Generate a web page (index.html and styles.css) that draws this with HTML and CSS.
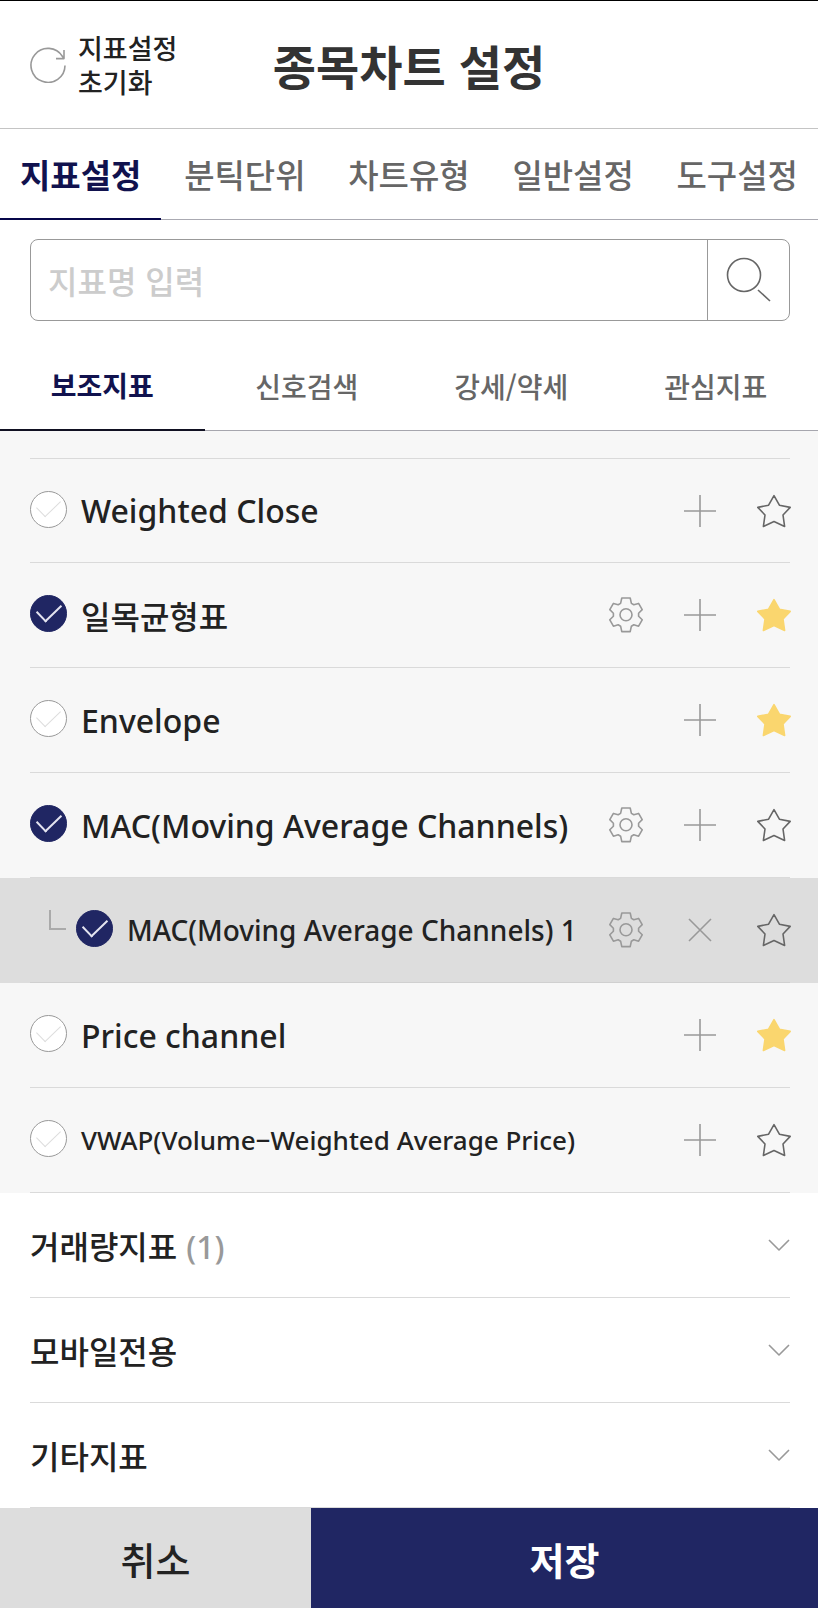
FILE: index.html
```html
<!DOCTYPE html>
<html lang="ko">
<head>
    <meta charset="UTF-8">
    <meta name="viewport" content="width=device-width, initial-scale=1.0">
    <title>종목차트 설정</title>
    <link rel="stylesheet" href="styles.css">
</head>
<body>
    <!-- shared icons -->
    <svg class="sprite" aria-hidden="true">
        <symbol id="gear" viewBox="0 0 34 36">
            <path d="M12.8 1h8.4l1.2 5.4 2.4 1.4 4.8-1.4 3.6 6.2-3.6 3.6v3l3.6 3.6-3.6 6.4-4.8-1.4-2.4 1.4-1.2 5.4h-8.4l-1.2-5.4-2.4-1.4-4.8 1.4-3.6-6.4 3.6-3.6v-3L.8 12.6l3.6-6.2 4.8 1.4 2.4-1.4z"/>
            <circle cx="17" cy="17.8" r="6"/>
        </symbol>
        <symbol id="plus" viewBox="0 0 34 36">
            <path d="M1 18h32M17 2v32"/>
        </symbol>
        <symbol id="close" viewBox="0 0 34 36">
            <path d="M6 7l22 22M28 7L6 29"/>
        </symbol>
        <symbol id="star" viewBox="0 0 34 36">
            <path d="M17 2.6l5.4 9.6 10.8 2.2-7.2 7.6 1.6 11.4-10.6-4.8-10.6 4.8L8 22 .8 14.4l10.8-2.2z"/>
        </symbol>
        <symbol id="chevron" viewBox="0 0 22 12">
            <path d="M1 1l10 10L21 1"/>
        </symbol>
    </svg>

    <header class="header">
        <button class="reset" type="button">
            <svg width="36" height="36" viewBox="0 0 36 36" aria-hidden="true">
                <path d="M35 18.5A17 17 0 1 1 32.5 9.5L34 11.5M34 3v8.6h-8"/>
            </svg>
            <span>지표설정<br>초기화</span>
        </button>
        <h1>종목차트 설정</h1>
    </header>

    <nav class="tabs">
        <button class="active" type="button">지표설정</button>
        <button type="button">분틱단위</button>
        <button type="button">차트유형</button>
        <button type="button">일반설정</button>
        <button type="button">도구설정</button>
    </nav>

    <form class="search-bar">
        <input type="text" placeholder="지표명 입력" aria-label="지표명 입력">
        <button type="button" aria-label="검색">
            <svg width="46" height="46" viewBox="0 0 46 46" aria-hidden="true">
                <circle cx="18" cy="18" r="16.5"/>
                <path d="M32 33l12 11"/>
            </svg>
        </button>
    </form>

    <nav class="sub-tabs">
        <button class="active" type="button">보조지표</button>
        <button type="button">신호검색</button>
        <button type="button">강세/약세</button>
        <button type="button">관심지표</button>
    </nav>

    <ul class="indicators">
        <li>
            <div class="row">
                <input type="checkbox" id="weighted">
                <label for="weighted">Weighted Close</label>
                <button type="button" aria-label="추가"><svg><use href="#plus"/></svg></button>
                <button class="star" type="button" aria-label="관심"><svg><use href="#star"/></svg></button>
            </div>
        </li>
        <li>
            <div class="row">
                <input type="checkbox" id="ichimoku" checked>
                <label for="ichimoku">일목균형표</label>
                <button type="button" aria-label="설정"><svg><use href="#gear"/></svg></button>
                <button type="button" aria-label="추가"><svg><use href="#plus"/></svg></button>
                <button class="star on" type="button" aria-label="관심"><svg><use href="#star"/></svg></button>
            </div>
        </li>
        <li>
            <div class="row">
                <input type="checkbox" id="envelope">
                <label for="envelope">Envelope</label>
                <button type="button" aria-label="추가"><svg><use href="#plus"/></svg></button>
                <button class="star on" type="button" aria-label="관심"><svg><use href="#star"/></svg></button>
            </div>
        </li>
        <li>
            <div class="row">
                <input type="checkbox" id="mac" checked>
                <label for="mac">MAC(Moving Average Channels)</label>
                <button type="button" aria-label="설정"><svg><use href="#gear"/></svg></button>
                <button type="button" aria-label="추가"><svg><use href="#plus"/></svg></button>
                <button class="star" type="button" aria-label="관심"><svg><use href="#star"/></svg></button>
            </div>
        </li>
        <li class="child">
            <div class="row">
                <span class="branch"></span>
                <input type="checkbox" id="mac1" checked>
                <label class="medium" for="mac1">MAC(Moving Average Channels) 1</label>
                <button type="button" aria-label="설정"><svg><use href="#gear"/></svg></button>
                <button type="button" aria-label="삭제"><svg><use href="#close"/></svg></button>
                <button class="star" type="button" aria-label="관심"><svg><use href="#star"/></svg></button>
            </div>
        </li>
        <li>
            <div class="row">
                <input type="checkbox" id="price">
                <label for="price">Price channel</label>
                <button type="button" aria-label="추가"><svg><use href="#plus"/></svg></button>
                <button class="star on" type="button" aria-label="관심"><svg><use href="#star"/></svg></button>
            </div>
        </li>
        <li>
            <div class="row">
                <input type="checkbox" id="vwap">
                <label class="small" for="vwap">VWAP(Volume−Weighted Average Price)</label>
                <button type="button" aria-label="추가"><svg><use href="#plus"/></svg></button>
                <button class="star" type="button" aria-label="관심"><svg><use href="#star"/></svg></button>
            </div>
        </li>
    </ul>

    <div class="groups">
        <button type="button"><span>거래량지표 <span class="count">(1)</span></span><svg><use href="#chevron"/></svg></button>
        <button type="button"><span>모바일전용</span><svg><use href="#chevron"/></svg></button>
        <button type="button"><span>기타지표</span><svg><use href="#chevron"/></svg></button>
    </div>

    <footer class="footer">
        <button class="cancel" type="button">취소</button>
        <button class="save" type="button">저장</button>
    </footer>
</body>
</html>
```

FILE: styles.css
```css
* {
    box-sizing: border-box;
}
body {
    margin: 0;
    min-height: 100vh;
    display: flex;
    flex-direction: column;
    background-color: #fff;
    color: #222;
    font-family: "Noto Sans CJK KR", sans-serif;
    font-weight: 500;
}
button, input {
    margin: 0;
    padding: 0;
    border: none;
    border-radius: 0;
    background: none;
    color: inherit;
    font: inherit;
}
button {
    cursor: pointer;
}
svg {
    display: block;
    fill: none;
    stroke: #999;
    stroke-width: 1.6;
    stroke-linejoin: round;
}
.sprite {
    position: absolute;
    width: 0;
    height: 0;
}

/* header */
.header {
    display: grid;
    grid-template-columns: 1fr auto 1fr;
    align-items: center;
    height: 129px;
    padding: 0 30px;
    border-top: 1px solid #000;
    border-bottom: 1px solid #c4c4c4;
}
.reset {
    display: flex;
    align-items: center;
    gap: 12px;
    font-size: 27px;
    line-height: 34px;
    text-align: left;
}
.header h1 {
    margin: 0;
    color: #333;
    font-size: 47px;
    font-weight: 700;
}

/* tabs */
.tabs {
    display: flex;
    justify-content: space-between;
    height: 91px;
    border-bottom: 1px solid #aaaab2;
    color: #666;
    font-size: 33px;
}
.tabs button {
    padding: 0 20px;
}
.tabs .active, .sub-tabs .active {
    margin-bottom: -1px;
    border-bottom: 2px solid #06064a;
    color: #11124e;
    font-weight: 700;
}
.sub-tabs {
    display: grid;
    grid-template-columns: repeat(4, 1fr);
    height: 90px;
    border-bottom: 1px solid #a6a6ae;
    color: #666;
    font-size: 28px;
}
.sub-tabs .active {
    border-color: #111122;
}

/* search */
.search-bar {
    display: flex;
    height: 82px;
    margin: 19px 28px 20px 30px;
    border: 1px solid #999;
    border-radius: 8px;
}
.search-bar input {
    flex: 1;
    min-width: 0;
    padding: 0 17px;
    font-size: 32px;
    outline: none;
}
.search-bar input::placeholder {
    color: #ccc;
    opacity: 1;
}
.search-bar button {
    display: grid;
    place-items: center;
    width: 82px;
    border-left: 1px solid #999;
}
.search-bar svg {
    stroke: #666;
}

/* indicator list */
.indicators {
    margin: 0;
    padding: 27px 0 0;
    background-color: #f7f7f7;
    list-style: none;
}
.indicators li {
    padding: 0 28px 0 30px;
}
.row {
    display: flex;
    align-items: center;
    height: 105px;
    border-bottom: 1px solid #dadada;
}
.indicators li:first-child .row {
    border-top: 1px solid #dadada;
}
.row label {
    flex: 1;
    padding-left: 14px;
    font-family: "Noto Sans", "Noto Sans CJK KR", sans-serif;
    font-size: 32px;
    white-space: nowrap;
}
.row .medium {
    font-size: 28px;
}
.row .small {
    font-size: 26px;
}
.row button {
    margin-left: 40px;
}
.row label + button {
    margin-left: 30px;
}
.row .star {
    margin-right: -1px;
}
.row svg {
    width: 34px;
    height: 36px;
    overflow: visible;
}
.star svg {
    stroke: #666;
}
.star.on svg {
    fill: #fad66e;
    stroke: #fad66e;
}
.row input {
    appearance: none;
    display: grid;
    place-items: center;
    flex: none;
    width: 37px;
    height: 37px;
    margin-bottom: 3px;
    border: 1px solid #999;
    border-radius: 50%;
    background-color: #fff;
}
.row input::before {
    content: "";
    width: 12px;
    height: 21px;
    border: solid #ddd;
    border-width: 0 1px 1px 0;
    transform: translateY(-4px) rotate(46deg);
}
.row input:checked {
    border-color: #202663;
    background-color: #202663;
}
.row input:checked::before {
    border-color: #e4e4f0;
    border-width: 0 2px 2px 0;
}
.child {
    background-color: #ddd;
}
.child .row {
    border-color: #d0d0d0;
}
.branch {
    align-self: flex-start;
    flex: none;
    width: 17px;
    height: 20px;
    margin: 32px 10px 0 19px;
    border: solid #aaa;
    border-width: 0 0 2px 2px;
}

/* collapsed groups */
.groups {
    padding: 0 28px 0 30px;
}
.groups button {
    display: flex;
    justify-content: space-between;
    align-items: center;
    width: 100%;
    height: 105px;
    border-bottom: 1px solid #dadada;
    font-size: 32px;
}
.groups svg {
    width: 22px;
    height: 12px;
}
.count {
    color: #999;
    font-family: "Noto Sans", sans-serif;
}

/* footer */
.footer {
    display: flex;
    flex: 1;
    min-height: 100px;
    font-size: 38px;
}
.cancel {
    width: 38%;
    background-color: #ddd;
}
.save {
    flex: 1;
    background-color: #202663;
    color: #fff;
    font-weight: 700;
}
```
